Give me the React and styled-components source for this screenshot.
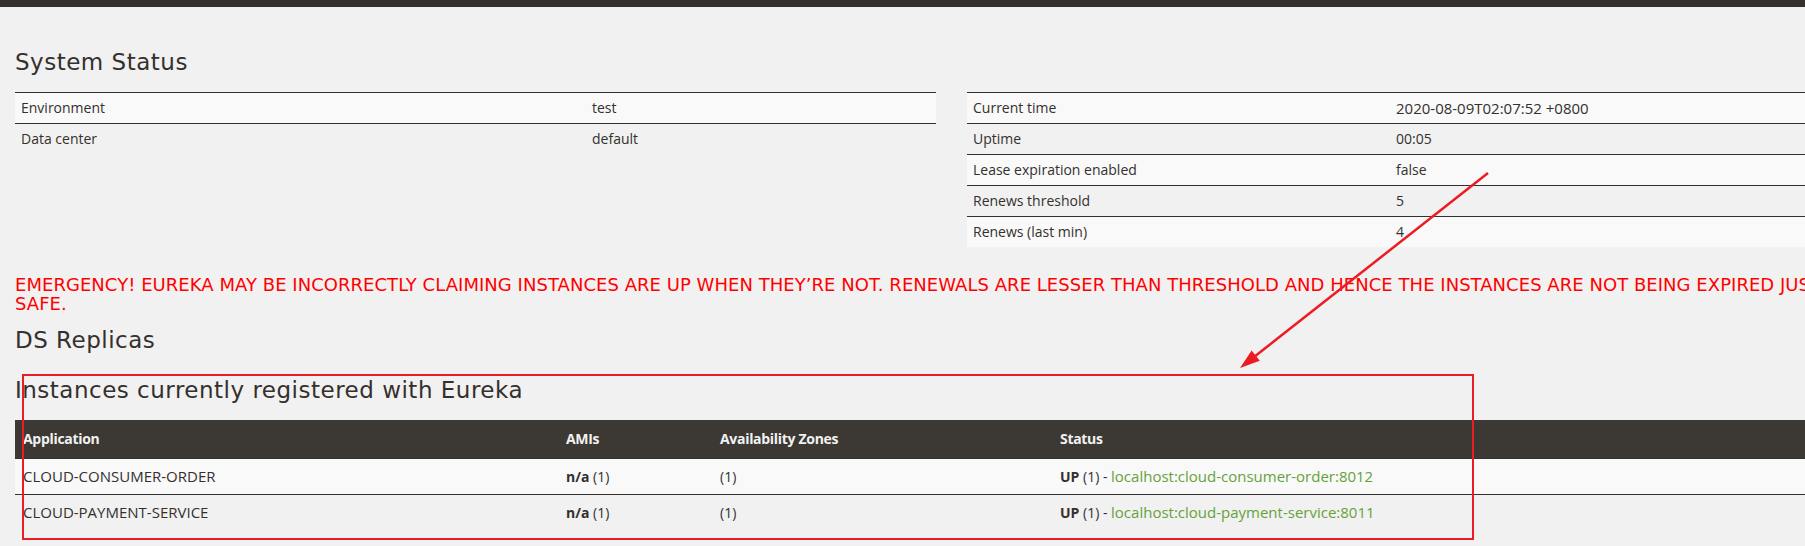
import React from "react";
import styled, { createGlobalStyle } from "styled-components";

const GlobalStyle = createGlobalStyle`
  html, body {
    margin: 0;
    padding: 0;
    background: #f1f1f1;
    overflow: hidden;
  }
  body {
    font-family: "Open Sans", "DejaVu Sans", sans-serif;
    color: #34302d;
  }
`;

const Page = styled.div`
  position: relative;
  width: 1903px;
  min-height: 546px;
`;

const TopBar = styled.div`
  height: 7px;
  background: #34302d;
`;

const Container = styled.div`
  padding: 0 15px;
`;

const Heading = styled.h2`
  margin: ${(p) => p.$mt}px 0 0;
  font-family: "DejaVu Sans", sans-serif;
  font-weight: normal;
  font-size: 23px;
  letter-spacing: 0.5px;
  line-height: 28px;
  color: #34302d;
`;

const StatusGrid = styled.div`
  display: grid;
  grid-template-columns: 921px 921px;
  column-gap: 31px;
  align-items: start;
  margin-top: 16px;
`;

const Table = styled.table`
  width: 100%;
  table-layout: fixed;
  border-collapse: separate;
  border-spacing: 0;
  font-size: 14px;
  margin-top: ${(p) => p.$mt || 0}px;
`;

const Col = styled.col`
  width: ${(p) => (p.$w ? `${p.$w}px` : "auto")};
`;

const Row = styled.tr`
  background: ${(p) => (p.$striped ? "#f9f9f9" : "transparent")};
`;

const Cell = styled.td`
  border-top: 1px solid #34302d;
  padding: 0 ${(p) => p.$pad || 6}px;
  line-height: ${(p) => p.$lh || 30}px;
  font-size: ${(p) => p.$fs || 14}px;
  white-space: nowrap;
  overflow: hidden;
  color: #34302d;
`;

const HeadCell = styled.th`
  background: #3c3834;
  color: #f1f1f1;
  text-align: left;
  font-weight: bold;
  font-size: 14px;
  letter-spacing: -0.3px;
  padding: 0 8px;
  line-height: 38px;
`;

const Emergency = styled.h4`
  margin: 28px 0 0;
  font-family: "DejaVu Sans", sans-serif;
  font-weight: normal;
  font-size: 18px;
  letter-spacing: 0.04px;
  line-height: 19px;
  color: #ff0000;
`;

const Bold = styled.b`
  font-weight: bold;
`;

const Link = styled.a`
  color: #66a23a;
  font-size: 15px;
  text-decoration: none;
`;

const Overlay = styled.svg`
  position: absolute;
  top: 0;
  left: 0;
  pointer-events: none;
`;

const systemLeft = [
  ["Environment", "test"],
  ["Data center", "default"],
];

const systemRight = [
  ["Current time", "2020-08-09T02:07:52 +0800"],
  ["Uptime", "00:05"],
  ["Lease expiration enabled", "false"],
  ["Renews threshold", "5"],
  ["Renews (last min)", "4"],
];

const instances = [
  { app: "CLOUD-CONSUMER-ORDER", url: "localhost:cloud-consumer-order:8012" },
  { app: "CLOUD-PAYMENT-SERVICE", url: "localhost:cloud-payment-service:8011" },
];

function InfoTable({ rows, labelWidth }) {
  return (
    <Table>
      <colgroup>
        <Col $w={labelWidth} />
        <Col />
      </colgroup>
      <tbody>
        {rows.map(([label, value], i) => (
          <Row key={label} $striped={i % 2 === 0}>
            <Cell>{label}</Cell>
            <Cell $fs={/\d{4}/.test(value) ? 15 : 14}>{value}</Cell>
          </Row>
        ))}
      </tbody>
    </Table>
  );
}

function Annotation() {
  return (
    <Overlay width="1805" height="546" viewBox="0 0 1805 546">
      <rect x="23" y="375" width="1450" height="164" fill="none" stroke="#ec1c24" strokeWidth="2" />
      <line x1="1488" y1="173" x2="1254" y2="357" stroke="#ec1c24" strokeWidth="2.5" />
      <polygon points="1240,368 1259.8,360.8 1251.6,350.4" fill="#ec1c24" />
    </Overlay>
  );
}

export default function App() {
  return (
    <Page>
      <GlobalStyle />
      <TopBar />
      <Container>
        <Heading $mt={41}>System Status</Heading>
        <StatusGrid>
          <InfoTable rows={systemLeft} labelWidth={571} />
          <InfoTable rows={systemRight} labelWidth={423} />
        </StatusGrid>

        <Emergency>
          EMERGENCY! EUREKA MAY BE INCORRECTLY CLAIMING INSTANCES ARE UP WHEN THEY’RE NOT. RENEWALS ARE LESSER THAN THRESHOLD AND HENCE THE INSTANCES ARE NOT BEING EXPIRED JUST TO BE
          <br />
          SAFE.
        </Emergency>

        <Heading $mt={13}>DS Replicas</Heading>
        <Heading $mt={22}>Instances currently registered with Eureka</Heading>

        <Table $mt={16}>
          <colgroup>
            <Col $w={543} />
            <Col $w={154} />
            <Col $w={340} />
            <Col />
          </colgroup>
          <thead>
            <tr>
              <HeadCell>Application</HeadCell>
              <HeadCell>AMIs</HeadCell>
              <HeadCell>Availability Zones</HeadCell>
              <HeadCell>Status</HeadCell>
            </tr>
          </thead>
          <tbody>
            {instances.map((inst, i) => (
              <Row key={inst.app} $striped={i % 2 === 0}>
                <Cell $pad={8} $lh={35} $fs={15}>{inst.app}</Cell>
                <Cell $pad={8} $lh={35}>
                  <Bold>n/a</Bold> (1)
                </Cell>
                <Cell $pad={8} $lh={35}>(1)</Cell>
                <Cell $pad={8} $lh={35}>
                  <Bold>UP</Bold> (1) - <Link href="#">{inst.url}</Link>
                </Cell>
              </Row>
            ))}
          </tbody>
        </Table>
      </Container>
      <Annotation />
    </Page>
  );
}
